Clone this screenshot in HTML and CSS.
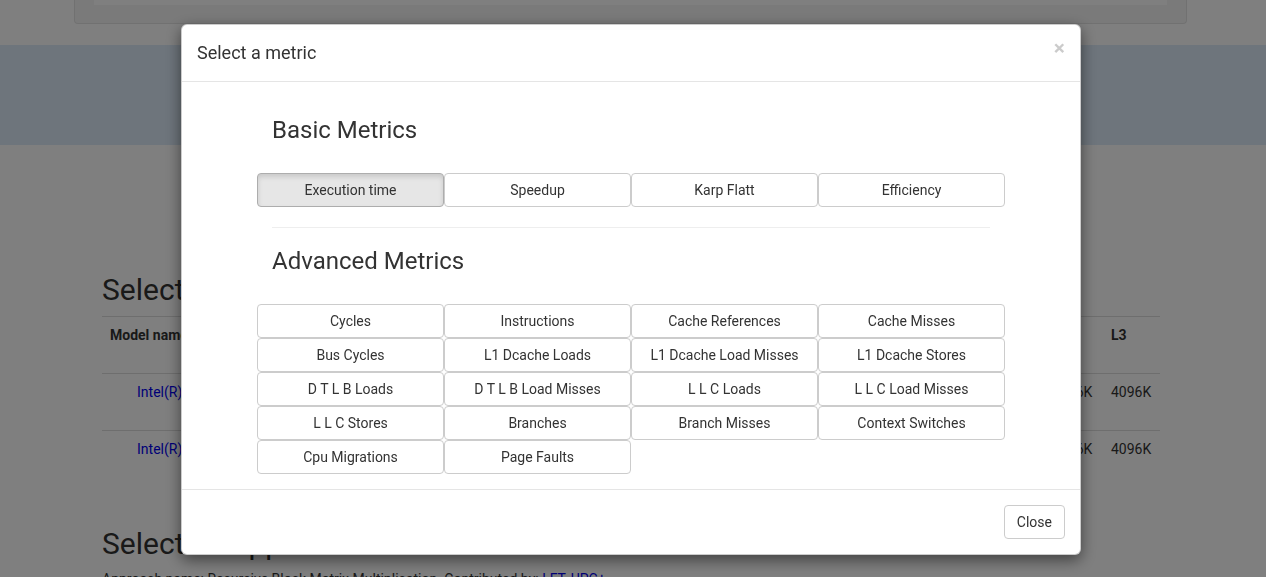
FILE: index.html
```
<!DOCTYPE html>
<html lang="en">
<head>
<meta charset="utf-8">
<title>Select a metric</title>
<link rel="stylesheet" href="styles.css">
</head>
<body>
<div class="page">
  <div class="top-panel"><div class="top-field"></div></div>
  <div class="banner"></div>
  <main class="content">
    <h2>Select a processor</h2>
    <table class="proc-table">
      <colgroup>
        <col class="c-model"><col><col><col><col><col><col class="c-l2"><col class="c-l3">
      </colgroup>
      <thead>
        <tr><th>Model name</th><th>Vendor</th><th>Frequency</th><th>Cores</th><th>Threads</th><th>L1d</th><th>L2</th><th>L3</th></tr>
      </thead>
      <tbody>
        <tr><td class="model"><a href="#">Intel(R) Core(TM) i5-2520M CPU @ 2.50GHz</a></td><td>GenuineIntel</td><td>2500 MHz</td><td>2</td><td>4</td><td>32K</td><td>256K</td><td>4096K</td></tr>
        <tr><td class="model"><a href="#">Intel(R) Core(TM) i5-2520M CPU @ 2.50GHz</a></td><td>GenuineIntel</td><td>2500 MHz</td><td>2</td><td>4</td><td>32K</td><td>256K</td><td>4096K</td></tr>
      </tbody>
    </table>
    <h2>Select an approach</h2>
    <p>Approach name: Recursive Block Matrix Multiplication. Contributed by: <a href="#">LFT, UPC+</a></p>
  </main>
</div>

<div class="backdrop"></div>

<div class="modal">
  <div class="modal-header">
    <h4 class="modal-title">Select a metric</h4>
    <button class="close" type="button">&times;</button>
  </div>
  <div class="modal-body">
    <div class="metrics">
      <div class="section-head"><h3>Basic Metrics</h3></div>
      <div class="btn-grid">
        <button class="btn active" type="button">Execution time</button>
        <button class="btn" type="button">Speedup</button>
        <button class="btn" type="button">Karp Flatt</button>
        <button class="btn" type="button">Efficiency</button>
      </div>
      <div class="section-head"><hr><h3>Advanced Metrics</h3></div>
      <div class="btn-grid">
        <button class="btn" type="button">Cycles</button>
        <button class="btn" type="button">Instructions</button>
        <button class="btn" type="button">Cache References</button>
        <button class="btn" type="button">Cache Misses</button>
        <button class="btn" type="button">Bus Cycles</button>
        <button class="btn" type="button">L1 Dcache Loads</button>
        <button class="btn" type="button">L1 Dcache Load Misses</button>
        <button class="btn" type="button">L1 Dcache Stores</button>
        <button class="btn" type="button">D T L B Loads</button>
        <button class="btn" type="button">D T L B Load Misses</button>
        <button class="btn" type="button">L L C Loads</button>
        <button class="btn" type="button">L L C Load Misses</button>
        <button class="btn" type="button">L L C Stores</button>
        <button class="btn" type="button">Branches</button>
        <button class="btn" type="button">Branch Misses</button>
        <button class="btn" type="button">Context Switches</button>
        <button class="btn" type="button">Cpu Migrations</button>
        <button class="btn" type="button">Page Faults</button>
      </div>
    </div>
  </div>
  <div class="modal-footer">
    <button class="btn" type="button">Close</button>
  </div>
</div>
</body>
</html>
```

FILE: styles.css
```
* { box-sizing: border-box; }

html, body {
  margin: 0;
  padding: 0;
  height: 100%;
  overflow: hidden;
}

body {
  font-family: Roboto, "Liberation Sans", Arial, sans-serif;
  font-size: 14px;
  line-height: 1.42857;
  color: #333;
  background: #fff;
}

a { color: #0000ee; text-decoration: none; }

/* ---------- page underneath ---------- */
.top-panel {
  margin: 0 79px 0 74px;
  height: 24px;
  padding: 0 19px;
  background: #f5f5f5;
  border: 1px solid #e3e3e3;
  border-top: 0;
  border-radius: 0 0 4px 4px;
}
.top-field {
  height: 5px;
  background: #fefefe;
}

.banner {
  margin-top: 21px;
  height: 100px;
  background: #dceaf8;
}

.content {
  margin: 0 106px 0 102px;
  padding-top: 108px;
}
.content h2 {
  font-size: 30px;
  font-weight: 400;
  line-height: 1.1;
  margin: 20px 0 10px;
}
.content p { margin: 0 0 10px; }

.proc-table {
  width: 100%;
  table-layout: fixed;
  border-collapse: separate;
  border-spacing: 0;
  margin-bottom: 40px;
}
.c-model { width: 287px; }
.c-l2 { width: 51px; }
.c-l3 { width: 57px; }
.proc-table th,
.proc-table td {
  height: 57px;
  padding: 8px;
  border-top: 1px solid #ddd;
  vertical-align: top;
  text-align: left;
  line-height: 20px;
  overflow: hidden;
}
.proc-table th { font-weight: 700; }
.proc-table td.model { text-align: center; }

/* ---------- modal ---------- */
.backdrop {
  position: fixed;
  inset: 0;
  background: rgba(0, 0, 0, 0.5);
}

.modal {
  position: fixed;
  top: 24px;
  left: 181px;
  width: 900px;
  background: #fff;
  border: 1px solid rgba(0, 0, 0, 0.2);
  border-radius: 6px;
  box-shadow: 0 5px 15px rgba(0, 0, 0, 0.5);
}

.modal-header {
  display: flex;
  justify-content: space-between;
  align-items: flex-start;
  padding: 15px;
  border-bottom: 1px solid #e5e5e5;
}
.modal-title {
  margin: 0;
  font-size: 18px;
  font-weight: 400;
  line-height: 1.42857;
}
.close {
  margin-top: -2px;
  padding: 0;
  border: 0;
  background: transparent;
  font-family: inherit;
  font-size: 21px;
  font-weight: 700;
  line-height: 1;
  color: #000;
  opacity: 0.2;
  text-shadow: 0 1px 0 #fff;
  cursor: pointer;
}

.modal-body { padding: 15px; }

.metrics {
  width: 748px;
  margin: 0 auto;
}
.section-head { padding: 0 15px; }
.section-head h3 {
  margin: 20px 0 30px;
  font-size: 24px;
  font-weight: 400;
  line-height: 1.1;
}
.section-head hr {
  margin: 20px 0;
  border: 0;
  border-top: 1px solid #eee;
}

.btn-grid {
  display: grid;
  grid-template-columns: repeat(4, 1fr);
}

.btn {
  display: inline-block;
  padding: 6px 12px;
  font-family: inherit;
  font-size: 14px;
  line-height: 20px;
  color: #333;
  text-align: center;
  white-space: nowrap;
  background: #fff;
  border: 1px solid #ccc;
  border-radius: 4px;
  cursor: pointer;
}
.btn.active {
  background: #e6e6e6;
  border-color: #adadad;
  box-shadow: inset 0 3px 5px rgba(0, 0, 0, 0.125);
}

.modal-footer {
  display: flex;
  justify-content: flex-end;
  padding: 15px;
  border-top: 1px solid #e5e5e5;
}
```
